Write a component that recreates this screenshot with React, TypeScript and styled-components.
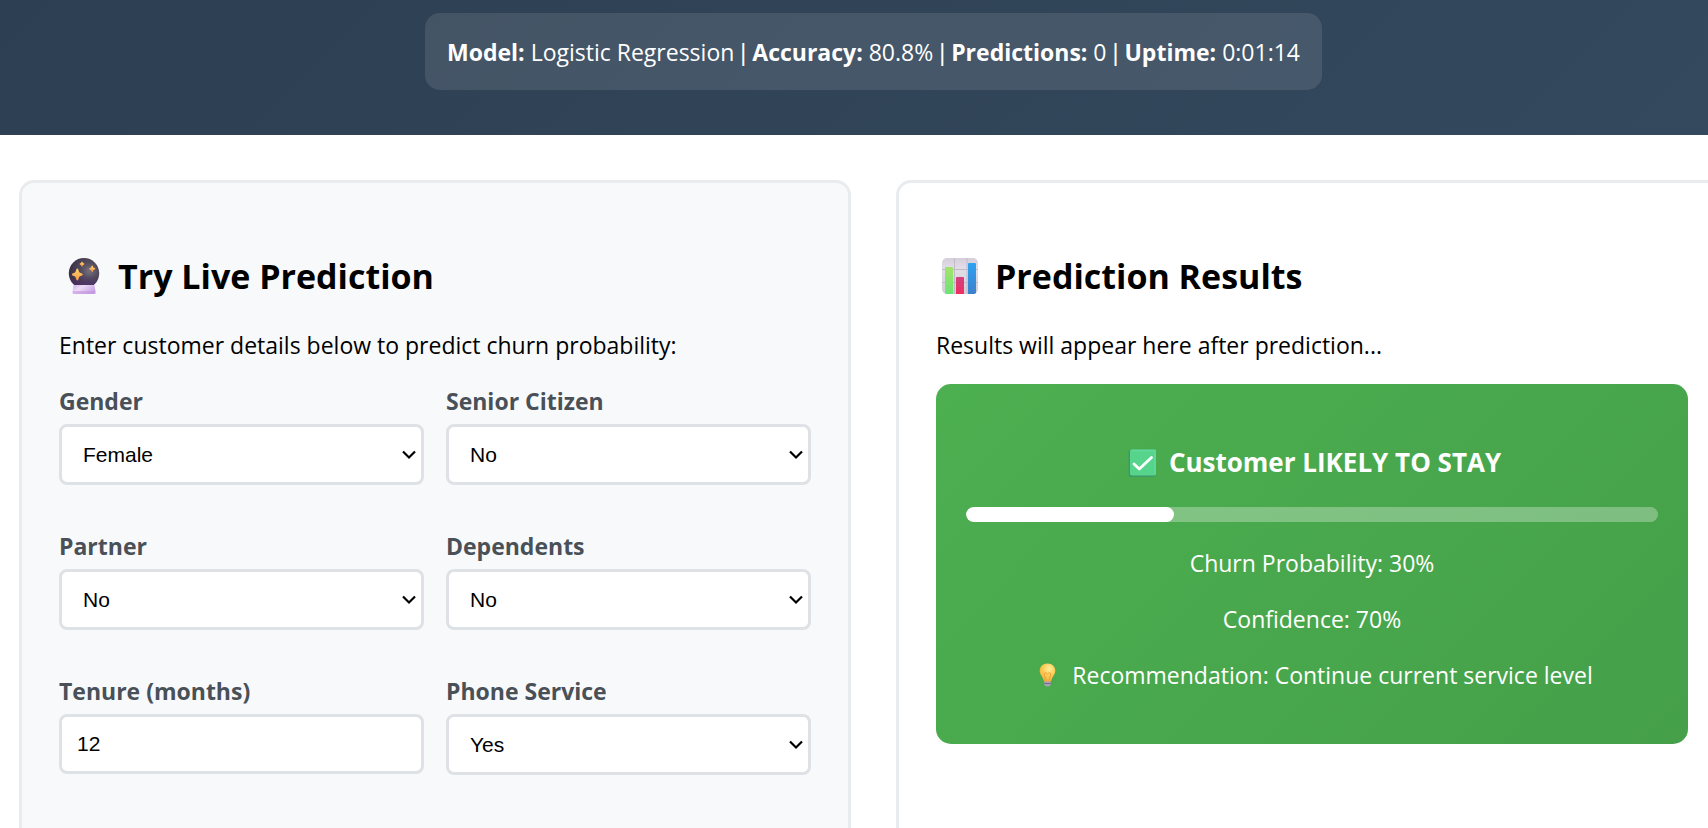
import React from "react";
import styled, { createGlobalStyle } from "styled-components";

const GlobalStyle = createGlobalStyle`
  *, *::before, *::after { box-sizing: border-box; }
  body {
    margin: 0;
    background: #fff;
    color: #000;
    font-family: "Segoe UI", "Open Sans", "Noto Sans", sans-serif;
    font-size: 23px;
    line-height: 32px;
  }
`;

const Viewport = styled.div`
  height: 100vh;
  overflow: hidden;
`;

const Page = styled.div`
  display: flex;
  flex-direction: column;
  width: calc(100% + 39px);
  min-height: 100%;
`;

const Header = styled.header`
  display: flex;
  justify-content: center;
  padding: 13px 45px 45px;
  background: linear-gradient(135deg, #2d3f52, #34495e);
  color: #fff;
`;

const StatusPill = styled.div`
  padding: 23px 22px 22px;
  border-radius: 15px;
  background: rgba(255, 255, 255, 0.1);
`;

const Separator = styled.span`
  font-family: "Liberation Sans", Arial, sans-serif;
  line-height: 1;
`;

const Panels = styled.main`
  flex: 1;
  display: grid;
  grid-template-columns: 1fr 1fr;
  gap: 45px;
  padding: 45px 19px;
`;

const Panel = styled.section<{ $tinted?: boolean }>`
  padding: 69px 37px 120px;
  border: 3px solid #e9ecef;
  border-radius: 15px;
  background: ${(p) => (p.$tinted ? "#f8f9fb" : "#fff")};
`;

const PanelTitle = styled.h2`
  display: flex;
  align-items: center;
  gap: 10px;
  margin: 0 0 29px;
  font-size: 34px;
  line-height: 48px;
  font-weight: 700;
`;

const Intro = styled.p`
  margin: 0 0 23px;
`;

const FormGrid = styled.form`
  display: grid;
  grid-template-columns: 1fr 1fr;
  gap: 44px 22px;
`;

const Field = styled.div`
  display: flex;
  flex-direction: column;
  gap: 6px;
`;

const Label = styled.label`
  color: #495057;
  font-weight: 700;
  line-height: 34px;
`;

const controlStyles = `
  width: 100%;
  height: 61px;
  border: 3px solid #dee2e6;
  border-radius: 8px;
  background: #fff;
  color: #000;
  font-family: "Liberation Sans", Arial, sans-serif;
  font-size: 21px;
`;

const SelectBox = styled.div`
  display: grid;
  align-items: center;
  & > * { grid-area: 1 / 1; }
`;

const Select = styled.select`
  ${controlStyles}
  appearance: none;
  padding: 0 40px 0 21px;
`;

const Chevron = styled.svg`
  justify-self: end;
  margin-right: 8px;
  pointer-events: none;
`;

const TextInput = styled.input`
  ${controlStyles}
  height: 60px;
  padding: 0 15px;
  appearance: textfield;
  &::-webkit-inner-spin-button { appearance: none; }
`;

const ResultCard = styled.div`
  padding: 60px 30px 53px;
  border-radius: 15px;
  background: linear-gradient(135deg, #4caf50, #45a049);
  color: #fff;
  text-align: center;
`;

const Verdict = styled.h3`
  display: flex;
  justify-content: center;
  align-items: center;
  gap: 8px;
  margin: 0 0 26px;
  font-size: 26px;
  line-height: 37px;
  font-weight: 700;
`;

const Track = styled.div`
  height: 15px;
  margin-bottom: 25px;
  border-radius: 8px;
  background: rgba(255, 255, 255, 0.3);
  overflow: hidden;
`;

const Fill = styled.div`
  height: 100%;
  border-radius: 8px;
  background: #fff;
`;

const ResultLine = styled.p`
  display: flex;
  justify-content: center;
  align-items: center;
  gap: 8px;
  margin: 0;

  & + & { margin-top: 24px; }
`;

const IconSlot = styled.svg`
  flex: none;
`;

const CrystalBall = () => (
  <IconSlot width="49" height="36" viewBox="0 0 49 36" aria-hidden="true">
    <defs>
      <radialGradient id="orb" cx="0.68" cy="0.42" r="0.65">
        <stop offset="0" stopColor="#77717f" />
        <stop offset="0.4" stopColor="#554e5f" />
        <stop offset="1" stopColor="#3b3048" />
      </radialGradient>
      <linearGradient id="orbShade" x1="0" y1="0" x2="0" y2="1">
        <stop offset="0.55" stopColor="#4a2a66" stopOpacity="0" />
        <stop offset="1" stopColor="#56327a" stopOpacity="0.8" />
      </linearGradient>
      <linearGradient id="base" x1="0" y1="0" x2="1" y2="0.5">
        <stop offset="0" stopColor="#c9b2e0" />
        <stop offset="0.4" stopColor="#ecdcf8" />
        <stop offset="1" stopColor="#c7a4e4" />
      </linearGradient>
      <linearGradient id="star" x1="0" y1="0" x2="0" y2="1">
        <stop offset="0" stopColor="#ffd06a" />
        <stop offset="1" stopColor="#f79a45" />
      </linearGradient>
    </defs>
    <circle cx="25" cy="15.3" r="15.2" fill="url(#orb)" />
    <circle cx="25" cy="15.3" r="15.2" fill="url(#orbShade)" />
    <path d="M15.500 27h19q1 0 1.200 1.200l.8 5.800q.2 2-1.500 2h-20q-1.700 0-1.500-2l.8-5.800q.2-1.200 1.200-1.200z" fill="url(#base)" />
    <path d="M14 33h22.300l.2 1.500q0 1.500-1.500 1.500h-20q-1.500 0-1.300-1.500z" fill="#c496dd" opacity="0.6" />
    <g fill="url(#star)">
      <path d="M18.300 10.600q1 0 1.300 2 .4 2.200 2 2.500 2.100.3 2.100 1.400t-2.100 1.400q-1.600.4-2 2.500-.3 2.100-1.300 2.100t-1.300-2.100q-.4-2.100-2-2.500-2.100-.3-2.100-1.400t2.100-1.400q1.600-.3 2-2.500.3-2 1.300-2z" />
      <path d="M23 3.500q.7 0 .9 1.600 1.500.2 1.500 1t-1.500 1q-.2 1.600-.9 1.600t-.9-1.600q-1.500-.2-1.500-1t1.500-1q.2-1.600.9-1.600z" />
      <path d="M33.200 7.500q.8 0 1.100 2 2 .3 2 1.200t-2 1.200q-.3 2-1.100 2t-1.100-2q-2-.3-2-1.200t2-1.200q.3-2 1.100-2z" />
    </g>
  </IconSlot>
);

const BarChart = () => (
  <IconSlot width="49" height="36" viewBox="0 0 49 36" aria-hidden="true">
    <defs>
      <linearGradient id="sheet" x1="0" y1="0" x2="0" y2="1">
        <stop offset="0" stopColor="#d5cedb" />
        <stop offset="0.3" stopColor="#e2dee8" />
        <stop offset="1" stopColor="#d3cdd9" />
      </linearGradient>
      <linearGradient id="green" x1="0" y1="0" x2="0" y2="1">
        <stop offset="0" stopColor="#a3e36b" />
        <stop offset="1" stopColor="#6be475" />
      </linearGradient>
      <linearGradient id="pink" x1="0" y1="0" x2="0" y2="1">
        <stop offset="0" stopColor="#d0427e" />
        <stop offset="1" stopColor="#f02e62" />
      </linearGradient>
      <linearGradient id="blue" x1="0" y1="0" x2="0" y2="1">
        <stop offset="0" stopColor="#2ea2f2" />
        <stop offset="1" stopColor="#3d80cc" />
      </linearGradient>
    </defs>
    <rect x="6" y="0" width="36" height="36" rx="5" fill="url(#sheet)" />
    <path d="M6 11.500h36M6 24.500h36M18.500 0v36M31 0v36" stroke="#c2bac8" strokeWidth="1" />
    <path d="M9 9h7q1 0 1 1v26h-7q-1 0-1-1z" fill="url(#green)" />
    <path d="M20 20q0-1 1-1h6q1 0 1 1v16h-8z" fill="url(#pink)" />
    <path d="M32 6q0-1 1-1h6q1 0 1 1v29q-1 1-2 1h-6z" fill="url(#blue)" />
  </IconSlot>
);

const CheckMark = () => (
  <IconSlot width="38" height="28" viewBox="0 0 38 28" aria-hidden="true">
    <rect x="5.500" y="1" width="26.500" height="27" rx="2" fill="#3c9a68" />
    <rect x="7" y="0.500" width="26" height="26" rx="2" fill="#57d48b" />
    <path d="M8.500 1.500h23.500v23.500" fill="none" stroke="#62d8a0" strokeWidth="1.500" />
    <path d="M11 15l5.300 5L28.500 8.500" fill="none" stroke="#fff" strokeWidth="2.800" strokeLinecap="round" strokeLinejoin="round" />
  </IconSlot>
);

const Bulb = () => (
  <IconSlot width="33" height="24" viewBox="0 0 33 24" aria-hidden="true">
    <defs>
      <radialGradient id="glass" cx="0.6" cy="0.3" r="0.75">
        <stop offset="0" stopColor="#fff0a0" />
        <stop offset="0.5" stopColor="#fccd55" />
        <stop offset="1" stopColor="#f3a63b" />
      </radialGradient>
    </defs>
    <path d="M13.300 17h6.400v4q0 2.500-3.200 2.500t-3.200-2.500z" fill="#aaa0b8" />
    <path d="M16.500.5c4.600 0 7.800 3.100 7.800 7.300 0 3.800-3 5.600-3.900 9.500q-.3 1.200-1.200 1.200h-5.400q-.9 0-1.200-1.200c-.9-3.900-3.900-5.700-3.900-9.500 0-4.200 3.200-7.300 7.800-7.300z" fill="url(#glass)" />
    <path d="M15 18l-1.500-6q-.8-2 .8-2.300 1.300 0 2.200 1.500.9-1.500 2.200-1.500 1.600.3.8 2.300L18 18" fill="none" stroke="#f0a03c" strokeWidth="1" />
    <path d="M13.500 20.500h6" stroke="#776788" strokeWidth="1" />
  </IconSlot>
);

const SelectField = ({ id, label, value, options }: { id: string; label: string; value: string; options: string[] }) => (
  <Field>
    <Label htmlFor={id}>{label}</Label>
    <SelectBox>
      <Select id={id} defaultValue={value}>
        {options.map((o) => (
          <option key={o}>{o}</option>
        ))}
      </Select>
      <Chevron width="14" height="10" viewBox="0 0 14 10" aria-hidden="true">
        <path d="M1 1.500l6 6 6-6" fill="none" stroke="#000" strokeWidth="2.200" />
      </Chevron>
    </SelectBox>
  </Field>
);

const yesNo = ["Yes", "No"];
const churnProbability = 30;

export default function App() {
  return (
    <Viewport>
      <GlobalStyle />
      <Page>
        <Header>
          <StatusPill>
            <strong>Model:</strong> Logistic Regression <Separator>|</Separator> <strong>Accuracy:</strong> 80.8%{" "}
            <Separator>|</Separator> <strong>Predictions:</strong> 0 <Separator>|</Separator> <strong>Uptime:</strong> 0:01:14
          </StatusPill>
        </Header>
        <Panels>
          <Panel $tinted>
            <PanelTitle>
              <CrystalBall />
              Try Live Prediction
            </PanelTitle>
            <Intro>Enter customer details below to predict churn probability:</Intro>
            <FormGrid>
              <SelectField id="gender" label="Gender" value="Female" options={["Female", "Male"]} />
              <SelectField id="senior" label="Senior Citizen" value="No" options={yesNo} />
              <SelectField id="partner" label="Partner" value="No" options={yesNo} />
              <SelectField id="dependents" label="Dependents" value="No" options={yesNo} />
              <Field>
                <Label htmlFor="tenure">Tenure (months)</Label>
                <TextInput id="tenure" type="number" defaultValue={12} />
              </Field>
              <SelectField id="phone" label="Phone Service" value="Yes" options={yesNo} />
            </FormGrid>
          </Panel>
          <Panel>
            <PanelTitle>
              <BarChart />
              Prediction Results
            </PanelTitle>
            <Intro>Results will appear here after prediction...</Intro>
            <ResultCard>
              <Verdict>
                <CheckMark />
                Customer LIKELY TO STAY
              </Verdict>
              <Track>
                <Fill style={{ width: `${churnProbability}%` }} />
              </Track>
              <ResultLine>Churn Probability: {churnProbability}%</ResultLine>
              <ResultLine>Confidence: {100 - churnProbability}%</ResultLine>
              <ResultLine>
                <Bulb />
                Recommendation: Continue current service level
              </ResultLine>
            </ResultCard>
          </Panel>
        </Panels>
      </Page>
    </Viewport>
  );
}
